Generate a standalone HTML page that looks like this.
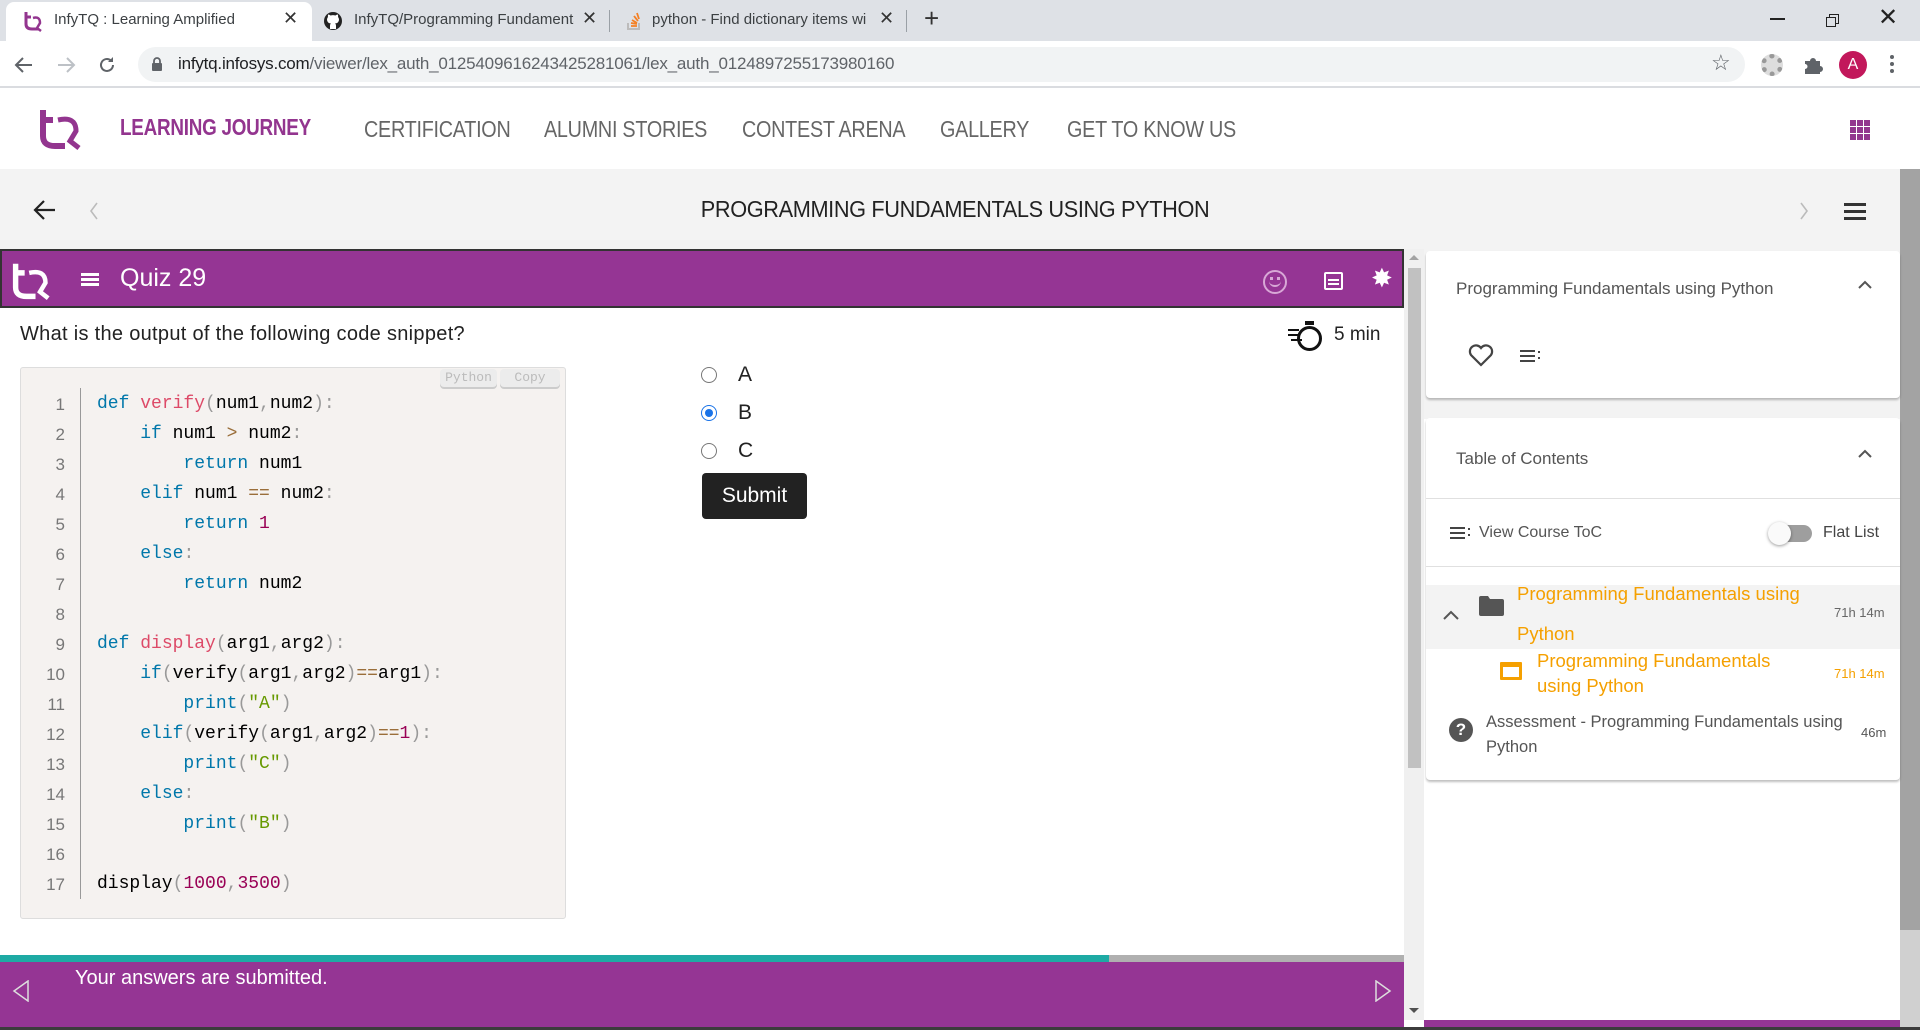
<!DOCTYPE html>
<html><head><meta charset="utf-8"><style>
*{margin:0;padding:0;box-sizing:border-box}
body{width:1920px;height:1030px;overflow:hidden;position:relative;font-family:"Liberation Sans",sans-serif;background:#fff}
.a{position:absolute}
.nav{font-size:23px;color:#666;top:116px;letter-spacing:-0.3px;transform:scaleX(0.86);transform-origin:left top;white-space:nowrap}
.code{font-family:"Liberation Mono",monospace;font-size:18px;line-height:30px;color:#000;white-space:pre}
.k{color:#0077aa}.f{color:#dd4a68}.n{color:#990055}.s{color:#669900}.o{color:#9a6e3a}.p{color:#999}
.ln{font-family:"Liberation Sans",sans-serif;font-size:17px;color:#777;line-height:30px;text-align:right;width:45px}
.tab{font-size:15px;color:#3c4043;top:11px}
.or{color:#f5a000}
</style></head><body>
<!-- tab strip -->
<div class="a" style="left:0;top:0;width:1920px;height:41px;background:#dee1e6"></div>
<div class="a" style="left:6px;top:2px;width:306px;height:39px;background:#fff;border-radius:8px 8px 0 0"></div>
<svg class="a" style="left:22px;top:10px" width="22" height="22" viewBox="0 0 22 22"><path d="M4 2v12q0 5 6 5h6M4 7h5" stroke="#93358f" stroke-width="3" fill="none"/><path d="M11 8q7-2 7 5l-3 5 4 3" stroke="#93358f" stroke-width="2.5" fill="none"/></svg>
<div class="a tab" style="left:54px">InfyTQ : Learning Amplified</div>
<div class="a" style="left:283px;top:8px;font-size:18px;color:#333">✕</div>
<svg class="a" style="left:323px;top:11px" width="20" height="20" viewBox="0 0 20 20"><circle cx="10" cy="10" r="9" fill="#222"/><path d="M7 18v-3q0-2 1-2.5-4-.5-4-4 0-1.5 1-2.5-.3-1 .1-2.5 1.2 0 2.5 1 2.4-.7 4.8 0 1.3-1 2.5-1 .4 1.5.1 2.5 1 1 1 2.5 0 3.5-4 4 1 .5 1 2.5v3z" fill="#fff"/></svg>
<div class="a tab" style="left:354px;width:220px;overflow:hidden;white-space:nowrap">InfyTQ/Programming Fundamentals</div>
<div class="a" style="left:582px;top:8px;font-size:18px;color:#333">✕</div>
<div class="a" style="left:609px;top:10px;width:1px;height:22px;background:#9aa0a6"></div>
<svg class="a" style="left:625px;top:10px" width="18" height="22" viewBox="0 0 18 22"><path d="M3 13v6h11v-6" stroke="#bcbbbb" stroke-width="2" fill="none"/><path d="M6 16h6M6 13l6 1M7 10l5 3M9 6l4 5M12 3l2 6" stroke="#f48024" stroke-width="1.8"/></svg>
<div class="a tab" style="left:652px;width:220px;overflow:hidden;white-space:nowrap">python - Find dictionary items wi</div>
<div class="a" style="left:879px;top:8px;font-size:18px;color:#333">✕</div>
<div class="a" style="left:906px;top:10px;width:1px;height:22px;background:#9aa0a6"></div>
<div class="a" style="left:924px;top:3px;font-size:26px;color:#333">+</div>
<div class="a" style="left:1770px;top:18px;width:15px;height:1.5px;background:#222"></div>
<div class="a" style="left:1829px;top:14px;width:10px;height:10px;border:1.3px solid #222"></div>
<div class="a" style="left:1826px;top:17px;width:10px;height:10px;border:1.3px solid #222;background:#dee1e6"></div>
<div class="a" style="left:1878px;top:3px;font-size:24px;color:#222;font-weight:100">✕</div>
<!-- toolbar -->
<div class="a" style="left:0;top:41px;width:1920px;height:47px;background:#fff;border-bottom:2px solid #dadce0"></div>
<svg class="a" style="left:14px;top:56px" width="20" height="18" viewBox="0 0 20 18"><path d="M18 9H3M9 2L2 9l7 7" stroke="#5f6368" stroke-width="2" fill="none"/></svg>
<svg class="a" style="left:56px;top:56px" width="20" height="18" viewBox="0 0 20 18"><path d="M2 9h15M11 2l7 7-7 7" stroke="#bdc1c6" stroke-width="2" fill="none"/></svg>
<svg class="a" style="left:97px;top:55px" width="20" height="20" viewBox="0 0 20 20"><path d="M16 10a6 6 0 1 1-2-4.5" stroke="#5f6368" stroke-width="2" fill="none"/><path d="M16 2v5h-5z" fill="#5f6368"/></svg>
<div class="a" style="left:138px;top:47px;width:1607px;height:35px;background:#f1f3f4;border-radius:18px"></div>
<svg class="a" style="left:151px;top:56px" width="12" height="16" viewBox="0 0 12 16"><rect x="1" y="7" width="10" height="8" rx="1" fill="#5f6368"/><path d="M3 7V5a3 3 0 0 1 6 0v2" stroke="#5f6368" stroke-width="1.8" fill="none"/></svg>
<div class="a" style="left:178px;top:54px;font-size:17px;color:#202124;letter-spacing:-0.2px">infytq.infosys.com<span style="color:#5f6368">/viewer/lex_auth_0125409616243425281061/lex_auth_0124897255173980160</span></div>
<div class="a" style="left:1711px;top:50px;font-size:22px;color:#5f6368">☆</div>
<div class="a" style="left:1761px;top:54px;width:22px;height:22px;border-radius:50%;border:5px dotted #999;background:#ddd"></div>
<svg class="a" style="left:1802px;top:54px" width="22" height="22" viewBox="0 0 22 22"><path d="M3 7h5a3 3 0 0 1 6 0h4v5a3 3 0 0 1 0 6v2H3v-5a2.5 2.5 0 0 0 0-5z" fill="#5f6368"/></svg>
<div class="a" style="left:1839px;top:51px;width:28px;height:28px;border-radius:50%;background:#c2185b;color:#fff;font-size:16px;text-align:center;line-height:28px">A</div>
<div class="a" style="left:1890px;top:55px;width:4px;height:4px;border-radius:50%;background:#5f6368;box-shadow:0 7px #5f6368,0 14px #5f6368"></div>
<!-- site nav -->
<svg class="a" style="left:38px;top:108px" width="44" height="42" viewBox="0 0 44 42"><path d="M5 2v26q0 10 12 10h10M5 12h10" stroke="#93358f" stroke-width="6" fill="none"/><path d="M20 12q18-4 18 11l-6 10 9 7" stroke="#93358f" stroke-width="5" fill="none"/></svg>
<div class="a nav" style="left:120px;top:114px;color:#93358f;font-weight:bold;transform:scaleX(0.82)">LEARNING JOURNEY</div>
<div class="a nav" style="left:364px">CERTIFICATION</div>
<div class="a nav" style="left:544px">ALUMNI STORIES</div>
<div class="a nav" style="left:742px">CONTEST ARENA</div>
<div class="a nav" style="left:940px">GALLERY</div>
<div class="a nav" style="left:1067px">GET TO KNOW US</div>
<div class="a" style="left:1850px;top:120px;width:20px;height:20px;background:repeating-linear-gradient(90deg,#93358f 0 6px,transparent 6px 7px),#fff;-webkit-mask:repeating-linear-gradient(0deg,#000 0 6px,transparent 6px 7px);mask:repeating-linear-gradient(0deg,#000 0 6px,transparent 6px 7px)"></div>
<!-- gray band -->
<div class="a" style="left:0;top:169px;width:1900px;height:80px;background:#f3f3f3"></div>
<div class="a" style="left:1900px;top:169px;width:20px;height:761px;background:#a3a3a3"></div>
<div class="a" style="left:1900px;top:930px;width:20px;height:100px;background:#d0d0d0"></div>
<svg class="a" style="left:33px;top:199px" width="24" height="22" viewBox="0 0 24 22"><path d="M22 11H3M11 2l-9 9 9 9" stroke="#222" stroke-width="2.2" fill="none"/></svg>
<svg class="a" style="left:88px;top:202px" width="12" height="18" viewBox="0 0 12 18"><path d="M9 1L3 9l6 8" stroke="#bbb" stroke-width="1.6" fill="none"/></svg>
<div class="a" style="left:0;top:196px;width:1910px;text-align:center;font-size:23px;color:#222;letter-spacing:-0.4px"><span style="display:inline-block;transform:scaleX(0.945)">PROGRAMMING FUNDAMENTALS USING PYTHON</span></div>
<svg class="a" style="left:1798px;top:202px" width="12" height="18" viewBox="0 0 12 18"><path d="M3 1l6 8-6 8" stroke="#bbb" stroke-width="1.6" fill="none"/></svg>
<div class="a" style="left:1844px;top:203px;width:22px;height:3px;background:#333;box-shadow:0 7px #333,0 14px #333"></div>
<!-- purple bar -->
<div class="a" style="left:0;top:249px;width:1404px;height:59px;background:#953594;border:2px solid #333"></div>
<svg class="a" style="left:11px;top:262px" width="40" height="38" viewBox="0 0 44 42"><path d="M5 2v26q0 10 12 10h10M5 12h10" stroke="#fff" stroke-width="6" fill="none"/><path d="M20 12q18-4 18 11l-6 10 9 7" stroke="#fff" stroke-width="5" fill="none"/></svg>
<div class="a" style="left:81px;top:273px;width:18px;height:3px;background:#fff;box-shadow:0 5px #fff,0 10px #fff"></div>
<div class="a" style="left:120px;top:264px;font-size:25px;color:#fff">Quiz 29</div>
<div class="a" style="left:1263px;top:270px;width:24px;height:24px;border-radius:50%;border:2px solid #d8a8d6"></div>
<div class="a" style="left:1270px;top:277px;width:3px;height:3px;background:#d8a8d6;box-shadow:7px 0 #d8a8d6"></div>
<div class="a" style="left:1269px;top:280px;width:12px;height:7px;border-bottom:2px solid #d8a8d6;border-radius:0 0 8px 8px"></div>
<div class="a" style="left:1324px;top:272px;width:19px;height:18px;border:2px solid #fff;border-radius:2px"></div>
<div class="a" style="left:1328px;top:279px;width:11px;height:2px;background:#fff;box-shadow:0 4px #fff"></div>
<div class="a" style="left:1371px;top:263px;font-size:26px;color:#fff">✸</div>
<!-- inner scrollbar -->
<div class="a" style="left:1404px;top:249px;width:20px;height:771px;background:#f0f0f0"></div>
<div class="a" style="left:1408px;top:268px;width:13px;height:500px;background:#c1c1c1"></div>
<div class="a" style="left:1409px;top:255px;border:5px solid transparent;border-bottom-color:#a3a3a3;border-top:0"></div>
<div class="a" style="left:1409px;top:1008px;border:5px solid transparent;border-top-color:#505050;border-bottom:0"></div>
<!-- right panel -->
<div class="a" style="left:1424px;top:249px;width:476px;height:773px;background:#fff"></div>
<div class="a" style="left:1424px;top:249px;width:476px;height:170px;background:#f3f3f3"></div>
<div class="a" style="left:1426px;top:251px;width:474px;height:147px;background:#fff;border-radius:4px;box-shadow:0 2px 2px rgba(0,0,0,.25)"></div>
<div class="a" style="left:1456px;top:279px;font-size:17px;color:#555">Programming Fundamentals using Python</div>
<svg class="a" style="left:1858px;top:280px" width="14" height="10" viewBox="0 0 14 10"><path d="M1 8l6-6 6 6" stroke="#555" stroke-width="2" fill="none"/></svg>
<svg class="a" style="left:1468px;top:343px" width="26" height="24" viewBox="0 0 26 24"><path d="M13 22L3 12a5.5 5.5 0 0 1 10-7 5.5 5.5 0 0 1 10 7z" stroke="#444" stroke-width="2.2" fill="none"/></svg>
<div class="a" style="left:1520px;top:350px;width:15px;height:2px;background:#444;box-shadow:0 5px #444,0 10px #444"></div>
<div class="a" style="left:1538px;top:351px;width:2px;height:2px;background:#444;box-shadow:0 6px #444"></div>
<div class="a" style="left:1426px;top:418px;width:474px;height:362px;background:#fff;border-radius:4px;box-shadow:0 2px 2px rgba(0,0,0,.25)"></div>
<div class="a" style="left:1456px;top:449px;font-size:17px;color:#555">Table of Contents</div>
<svg class="a" style="left:1858px;top:449px" width="14" height="10" viewBox="0 0 14 10"><path d="M1 8l6-6 6 6" stroke="#555" stroke-width="2" fill="none"/></svg>
<div class="a" style="left:1426px;top:498px;width:474px;height:1px;background:#e0e0e0"></div>
<div class="a" style="left:1450px;top:527px;width:15px;height:2px;background:#444;box-shadow:0 5px #444,0 10px #444"></div>
<div class="a" style="left:1468px;top:528px;width:2px;height:2px;background:#444;box-shadow:0 6px #444"></div>
<div class="a" style="left:1479px;top:524px;font-size:16px;color:#555">View Course ToC</div>
<div class="a" style="left:1772px;top:525px;width:40px;height:17px;border-radius:9px;background:#9e9e9e"></div>
<div class="a" style="left:1768px;top:522px;width:23px;height:23px;border-radius:50%;background:#fafafa;box-shadow:0 1px 3px rgba(0,0,0,.4)"></div>
<div class="a" style="left:1823px;top:524px;font-size:16px;color:#444">Flat List</div>
<div class="a" style="left:1426px;top:566px;width:474px;height:1px;background:#e0e0e0"></div>
<div class="a" style="left:1426px;top:585px;width:474px;height:64px;background:#f3f3f3;overflow:hidden">
 <div class="a or" style="left:91px;top:-11px;font-size:18.5px;line-height:40px">Programming Fundamentals using<br>Python</div>
</div>
<svg class="a" style="left:1443px;top:610px" width="16" height="10" viewBox="0 0 16 10"><path d="M1 9l7-7 7 7" stroke="#555" stroke-width="2" fill="none"/></svg>
<svg class="a" style="left:1479px;top:596px" width="25" height="20" viewBox="0 0 25 20"><path d="M0 2q0-2 2-2h7l2 3h12q2 0 2 2v13q0 2-2 2H2q-2 0-2-2z" fill="#555"/></svg>
<div class="a" style="left:1834px;top:605px;font-size:13px;color:#666">71h 14m</div>
<div class="a" style="left:1500px;top:662px;width:22px;height:18px;border:3px solid #f5a000;border-top-width:5px;border-radius:1px"></div>
<div class="a or" style="left:1537px;top:648px;font-size:18.5px;line-height:25px">Programming Fundamentals<br>using Python</div>
<div class="a or" style="left:1834px;top:666px;font-size:13px">71h 14m</div>
<div class="a" style="left:1449px;top:718px;width:24px;height:24px;border-radius:50%;background:#555;color:#fff;font-size:17px;font-weight:bold;text-align:center;line-height:24px">?</div>
<div class="a" style="left:1486px;top:710px;font-size:16.5px;color:#555;line-height:25px">Assessment - Programming Fundamentals using<br>Python</div>
<div class="a" style="left:1861px;top:725px;font-size:13px;color:#555">46m</div>
<!-- main content -->
<div class="a" style="left:20px;top:323px;font-size:20px;color:#222;letter-spacing:0.3px">What is the output of the following code snippet?</div>
<div class="a" style="left:1288px;top:329px;width:11px;height:2px;background:#111;box-shadow:0 5px #111,3px 10px #111"></div>
<div class="a" style="left:1297px;top:326px;width:25px;height:25px;border-radius:50%;border:3px solid #111"></div>
<div class="a" style="left:1305px;top:321px;width:9px;height:4px;background:#111"></div>
<div class="a" style="left:1334px;top:324px;font-size:19px;color:#222">5 min</div>
<div class="a" style="left:20px;top:367px;width:546px;height:552px;background:#f5f2f0;border:1px solid #ddd;border-radius:3px"></div>
<div class="a" style="left:440px;top:369px;width:57px;height:18px;background:#ececec;border-radius:4px;box-shadow:0 2px 0 #ccc;font-size:13px;color:#bbb;text-align:center;line-height:18px;font-family:'Liberation Mono',monospace">Python</div>
<div class="a" style="left:500px;top:369px;width:60px;height:18px;background:#ececec;border-radius:4px;box-shadow:0 2px 0 #ccc;font-size:13px;color:#bbb;text-align:center;line-height:18px;font-family:'Liberation Mono',monospace">Copy</div>
<div class="a" style="left:80px;top:388px;width:1px;height:511px;background:#999"></div>
<div class="a ln" style="left:20px;top:390px">1<br>2<br>3<br>4<br>5<br>6<br>7<br>8<br>9<br>10<br>11<br>12<br>13<br>14<br>15<br>16<br>17</div>
<div class="a code" style="left:97px;top:389px"><span class="k">def</span> <span class="f">verify</span><span class="p">(</span>num1<span class="p">,</span>num2<span class="p">):</span>
    <span class="k">if</span> num1 <span class="o">&gt;</span> num2<span class="p">:</span>
        <span class="k">return</span> num1
    <span class="k">elif</span> num1 <span class="o">==</span> num2<span class="p">:</span>
        <span class="k">return</span> <span class="n">1</span>
    <span class="k">else</span><span class="p">:</span>
        <span class="k">return</span> num2

<span class="k">def</span> <span class="f">display</span><span class="p">(</span>arg1<span class="p">,</span>arg2<span class="p">):</span>
    <span class="k">if</span><span class="p">(</span>verify<span class="p">(</span>arg1<span class="p">,</span>arg2<span class="p">)</span><span class="o">==</span>arg1<span class="p">):</span>
        <span class="k">print</span><span class="p">(</span><span class="s">"A"</span><span class="p">)</span>
    <span class="k">elif</span><span class="p">(</span>verify<span class="p">(</span>arg1<span class="p">,</span>arg2<span class="p">)</span><span class="o">==</span><span class="n">1</span><span class="p">):</span>
        <span class="k">print</span><span class="p">(</span><span class="s">"C"</span><span class="p">)</span>
    <span class="k">else</span><span class="p">:</span>
        <span class="k">print</span><span class="p">(</span><span class="s">"B"</span><span class="p">)</span>

display<span class="p">(</span><span class="n">1000</span><span class="p">,</span><span class="n">3500</span><span class="p">)</span></div>
<div class="a" style="left:701px;top:367px;width:16px;height:16px;border-radius:50%;border:1.5px solid #777;background:#fff"></div>
<div class="a" style="left:738px;top:363px;font-size:21px;color:#222">A</div>
<div class="a" style="left:701px;top:405px;width:16px;height:16px;border-radius:50%;border:1.5px solid #1a73e8;background:#fff"></div>
<div class="a" style="left:705px;top:409px;width:8px;height:8px;border-radius:50%;background:#1a73e8"></div>
<div class="a" style="left:738px;top:401px;font-size:21px;color:#222">B</div>
<div class="a" style="left:701px;top:443px;width:16px;height:16px;border-radius:50%;border:1.5px solid #777;background:#fff"></div>
<div class="a" style="left:738px;top:439px;font-size:21px;color:#222">C</div>
<div class="a" style="left:702px;top:473px;width:105px;height:46px;background:#222;border-radius:4px;color:#fff;font-size:21px;text-align:center;line-height:46px">Submit</div>
<!-- progress & footer -->
<div class="a" style="left:0;top:955px;width:1109px;height:7px;background:#1eaaa4"></div>
<div class="a" style="left:1109px;top:955px;width:295px;height:7px;background:#b0b0b0"></div>
<div class="a" style="left:0;top:962px;width:1404px;height:60px;background:#953594"></div>
<div class="a" style="left:75px;top:967px;font-size:20px;color:#fff">Your answers are submitted.</div>
<svg class="a" style="left:12px;top:980px" width="18" height="22" viewBox="0 0 18 22"><path d="M16 1L2 11l14 10z" stroke="#ddd" stroke-width="1.5" fill="none"/></svg>
<svg class="a" style="left:1374px;top:980px" width="18" height="22" viewBox="0 0 18 22"><path d="M2 1l14 10-14 10z" stroke="#ddd" stroke-width="1.5" fill="none"/></svg>
<div class="a" style="left:1424px;top:1020px;width:476px;height:7px;background:#953594"></div>
<div class="a" style="left:0;top:1022px;width:1404px;height:5px;background:#953594"></div>
<div class="a" style="left:0;top:1027px;width:1920px;height:3px;background:#3c3c3c"></div>
</body></html>
